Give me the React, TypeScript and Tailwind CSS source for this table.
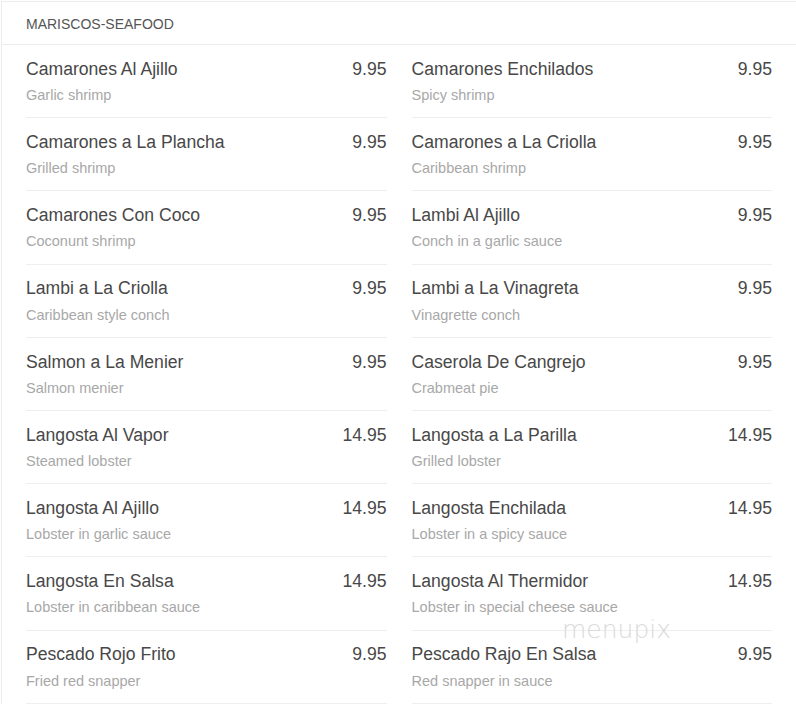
import React from "react";

const items: [string, string, string][] = [
  ["Camarones Al Ajillo", "Garlic shrimp", "9.95"],
  ["Camarones Enchilados", "Spicy shrimp", "9.95"],
  ["Camarones a La Plancha", "Grilled shrimp", "9.95"],
  ["Camarones a La Criolla", "Caribbean shrimp", "9.95"],
  ["Camarones Con Coco", "Coconunt shrimp", "9.95"],
  ["Lambi Al Ajillo", "Conch in a garlic sauce", "9.95"],
  ["Lambi a La Criolla", "Caribbean style conch", "9.95"],
  ["Lambi a La Vinagreta", "Vinagrette conch", "9.95"],
  ["Salmon a La Menier", "Salmon menier", "9.95"],
  ["Caserola De Cangrejo", "Crabmeat pie", "9.95"],
  ["Langosta Al Vapor", "Steamed lobster", "14.95"],
  ["Langosta a La Parilla", "Grilled lobster", "14.95"],
  ["Langosta Al Ajillo", "Lobster in garlic sauce", "14.95"],
  ["Langosta Enchilada", "Lobster in a spicy sauce", "14.95"],
  ["Langosta En Salsa", "Lobster in caribbean sauce", "14.95"],
  ["Langosta Al Thermidor", "Lobster in special cheese sauce", "14.95"],
  ["Pescado Rojo Frito", "Fried red snapper", "9.95"],
  ["Pescado Rajo En Salsa", "Red snapper in sauce", "9.95"],
];

export default function App() {
  return (
    <div
      className="relative w-[796px] h-[713px] bg-white overflow-hidden"
      style={{ fontFamily: '"Liberation Sans", Arial, sans-serif' }}
    >
      <div className="mt-[1px] ml-[1px] border-l border-t border-[#ececec]">
        <div className="h-[43px] flex items-center pt-[2px] pl-[24px] border-b border-[#ececec] text-[14px] text-[#555] uppercase">
          Mariscos-Seafood
        </div>
        <div className="grid grid-cols-2 gap-x-[25px] pl-[24px] pr-[24px]">
          {items.map(([name, desc, price], i) => (
            <div key={i} className="pt-[14px] pb-[13.2px] border-b border-[#eeeeee]">
              <div className="flex justify-between items-center h-[20px] text-[17.6px] text-[#484848]">
                <span>{name}</span>
                <span>{price}</span>
              </div>
              <div className="mt-[7px] h-[18px] leading-[18px] text-[14.5px] text-[#a8a8a8]">{desc}</div>
            </div>
          ))}
        </div>
      </div>
      <div
        className="absolute left-[562px] top-[615px] text-[25px] leading-[30px] text-[#dadada]"
        style={{ fontFamily: '"DejaVu Sans", sans-serif', fontWeight: 200 }}
      >
        menupix
      </div>
    </div>
  );
}
